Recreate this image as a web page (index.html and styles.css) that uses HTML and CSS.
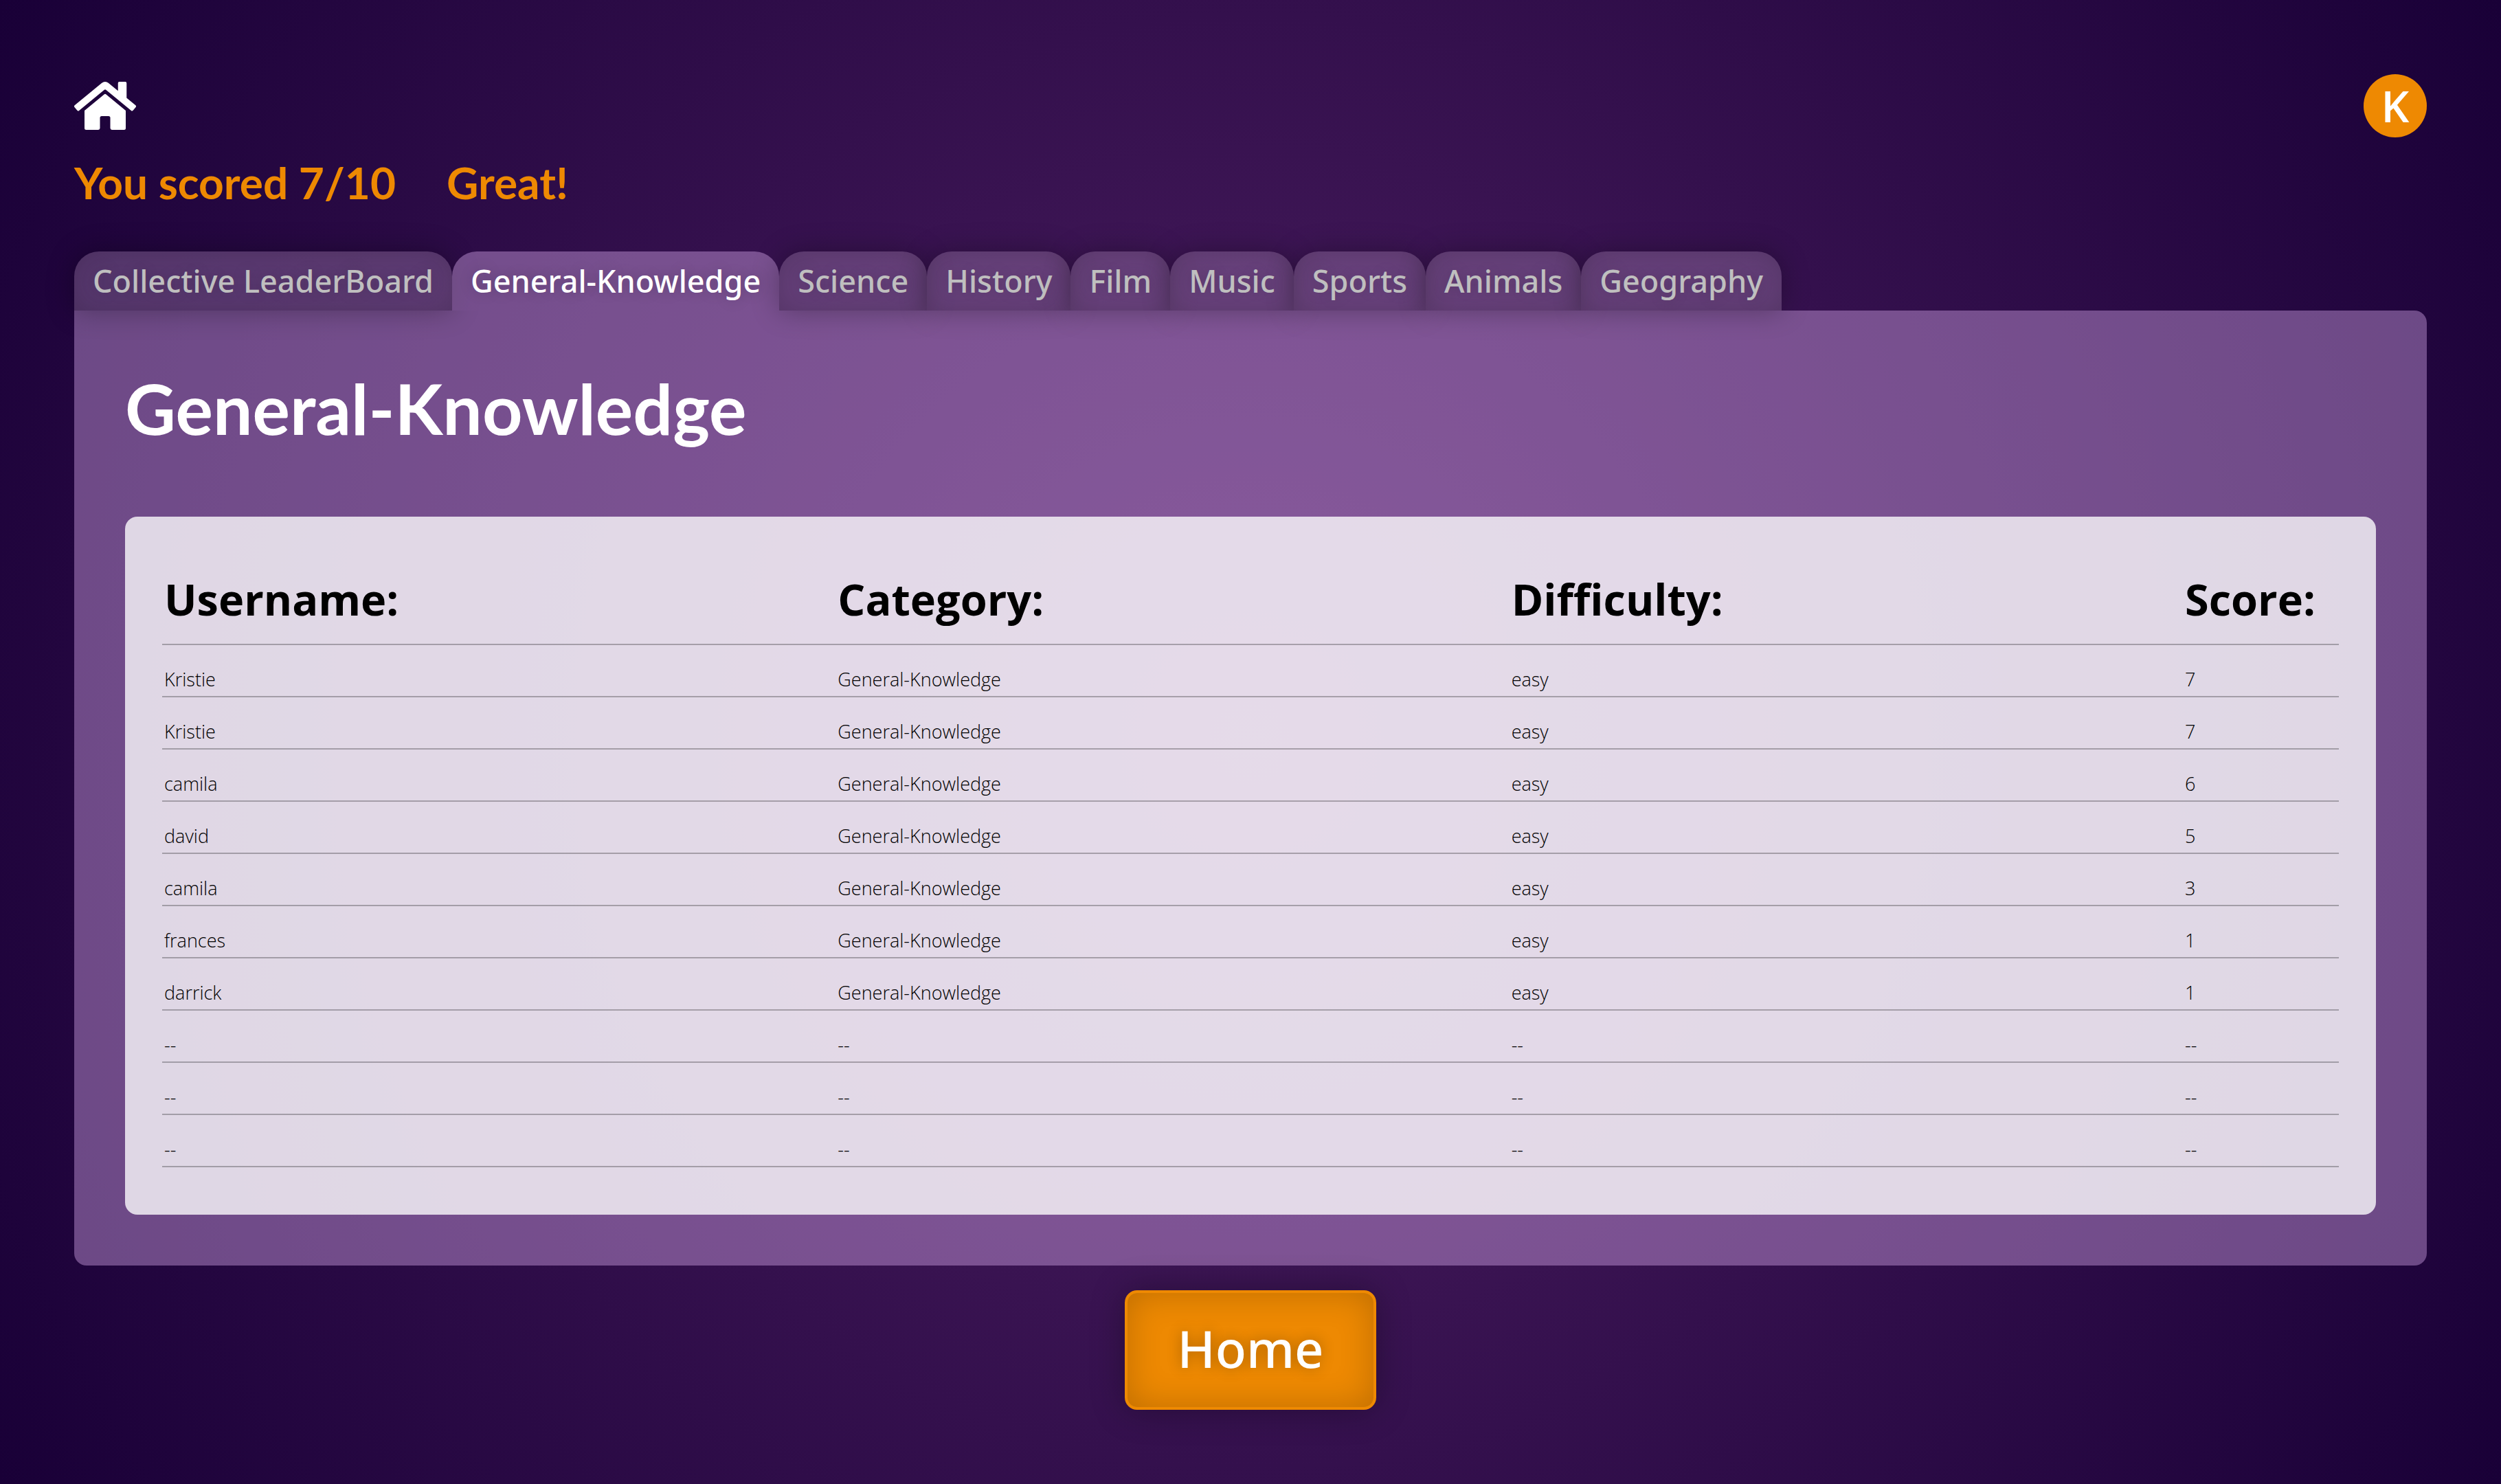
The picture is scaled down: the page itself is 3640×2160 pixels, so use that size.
FILE: index.html
```html
<!DOCTYPE html>
<html lang="en">
<head>
<meta charset="utf-8">
<title>Leaderboard</title>
<link rel="stylesheet" href="styles.css">
</head>
<body>
<header class="topbar">
  <a class="home-link" href="#" aria-label="Home">
    <svg class="home-icon" viewBox="0 0 576 512" aria-hidden="true"><path fill="currentColor" d="M280.37 148.26L96 300.11V464a16 16 0 0 0 16 16l112.06-.29a16 16 0 0 0 15.92-16V368a16 16 0 0 1 16-16h64a16 16 0 0 1 16 16v95.64a16 16 0 0 0 16 16.05L464 480a16 16 0 0 0 16-16V300L295.67 148.26a12.19 12.19 0 0 0-15.3 0zM571.6 251.47L488 182.56V44.05a12 12 0 0 0-12-12h-56a12 12 0 0 0-12 12v72.61L318.47 43a48 48 0 0 0-61 0L4.34 251.47a12 12 0 0 0-1.6 16.9l25.5 31A12 12 0 0 0 45.15 301l235.22-193.74a12.19 12.19 0 0 1 15.3 0L530.9 301a12 12 0 0 0 16.9-1.6l25.5-31a12 12 0 0 0-1.7-16.93z"/></svg>
  </a>
  <span class="avatar">K</span>
</header>
<main class="board">
  <div class="result"><span>You scored 7/10</span><span>Great!</span></div>
  <nav class="tabs">
    <button class="tab" type="button">Collective LeaderBoard</button>
    <button class="tab tab-active" type="button">General-Knowledge</button>
    <button class="tab" type="button">Science</button>
    <button class="tab" type="button">History</button>
    <button class="tab" type="button">Film</button>
    <button class="tab" type="button">Music</button>
    <button class="tab" type="button">Sports</button>
    <button class="tab" type="button">Animals</button>
    <button class="tab" type="button">Geography</button>
  </nav>
  <section class="panel">
    <h1 class="title">General-Knowledge</h1>
    <div class="card">
      <table class="scores">
        <thead>
          <tr><th scope="col">Username:</th><th scope="col">Category:</th><th scope="col">Difficulty:</th><th scope="col" class="score">Score:</th></tr>
        </thead>
        <tbody>
          <tr><td>Kristie</td><td>General-Knowledge</td><td>easy</td><td>7</td></tr>
          <tr><td>Kristie</td><td>General-Knowledge</td><td>easy</td><td>7</td></tr>
          <tr><td>camila</td><td>General-Knowledge</td><td>easy</td><td>6</td></tr>
          <tr><td>david</td><td>General-Knowledge</td><td>easy</td><td>5</td></tr>
          <tr><td>camila</td><td>General-Knowledge</td><td>easy</td><td>3</td></tr>
          <tr><td>frances</td><td>General-Knowledge</td><td>easy</td><td>1</td></tr>
          <tr><td>darrick</td><td>General-Knowledge</td><td>easy</td><td>1</td></tr>
          <tr><td>--</td><td>--</td><td>--</td><td>--</td></tr>
          <tr><td>--</td><td>--</td><td>--</td><td>--</td></tr>
          <tr><td>--</td><td>--</td><td>--</td><td>--</td></tr>
        </tbody>
      </table>
    </div>
  </section>
</main>
<button class="home-button" type="button">Home</button>
</body>
</html>
```
FILE: styles.css
```css
* {
  box-sizing: border-box;
}

body {
  display: flex;
  flex-direction: column;
  min-height: 100vh;
  margin: 0;
  padding: 108px;
  background: radial-gradient(circle, #4f2063, #190037);
  color: #fff;
  font-family: "Open Sans", sans-serif;
}

button {
  border: 0;
  color: inherit;
  font-family: "Noto Sans", "Open Sans", sans-serif;
}

.topbar {
  display: flex;
  align-items: center;
  justify-content: space-between;
}

.home-link {
  display: flex;
  color: #fff;
}

.home-icon {
  width: 90px;
  height: 80px;
}

.avatar {
  display: grid;
  place-items: center;
  width: 92px;
  height: 92px;
  border-radius: 50%;
  background: #ee8902;
  font-size: 64px;
  font-weight: 600;
  line-height: 92px;
}

.result {
  display: flex;
  gap: 74px;
  padding: 18px 0 52px;
  color: #ee8902;
  font-family: Lato, sans-serif;
  font-size: 64px;
  font-weight: 700;
  line-height: 96px;
}

.tabs {
  display: flex;
}

.tab {
  padding: 0 27px;
  border-radius: 36px 36px 0 0;
  background: rgba(169, 133, 184, 0.4);
  box-shadow: 0 0 40px rgba(0, 0, 0, 0.3), inset 0 0 40px rgba(0, 0, 0, 0.16);
  color: #bfbfbf;
  font-size: 45px;
  font-weight: 500;
  line-height: 86px;
  text-shadow: 0 0 20px rgba(0, 0, 0, 0.2);
}

.tab-active {
  background: rgba(225, 177, 245, 0.4);
  box-shadow: none;
  color: #fff;
}

.panel {
  padding: 74px;
  border-radius: 0 18px 18px 18px;
  background: rgba(225, 177, 245, 0.4);
}

.title {
  margin: 0 0 90px;
  font-family: Lato, sans-serif;
  font-size: 102px;
  font-weight: 700;
  line-height: 136px;
}

.card {
  padding: 76px 54px 69px;
  border-radius: 18px;
  background: rgba(255, 255, 255, 0.78);
  color: #000;
}

.scores {
  width: 100%;
  border-collapse: collapse;
  table-layout: fixed;
}

.scores th,
.scores td {
  padding: 0 3px;
  border-bottom: 2px solid rgba(0, 0, 0, 0.27);
  text-align: left;
}

.scores th {
  padding-bottom: 21px;
  font-size: 63px;
  font-weight: 700;
  line-height: 88px;
}

.scores .score {
  width: 227px;
}

.scores td {
  padding-top: 30px;
  padding-bottom: 4px;
  font-size: 27px;
  font-weight: 300;
  line-height: 40px;
}

.home-button {
  align-self: center;
  margin-top: 36px;
  padding: 0 72px 4px;
  border: 4px solid #ee8902;
  border-radius: 18px;
  background: #ee8902;
  box-shadow: 0 0 50px rgba(0, 0, 0, 0.3), inset 0 0 50px rgba(0, 0, 0, 0.2);
  font-size: 74px;
  font-weight: 500;
  line-height: 162px;
  text-shadow: 0 0 20px rgba(0, 0, 0, 0.3);
}
```
